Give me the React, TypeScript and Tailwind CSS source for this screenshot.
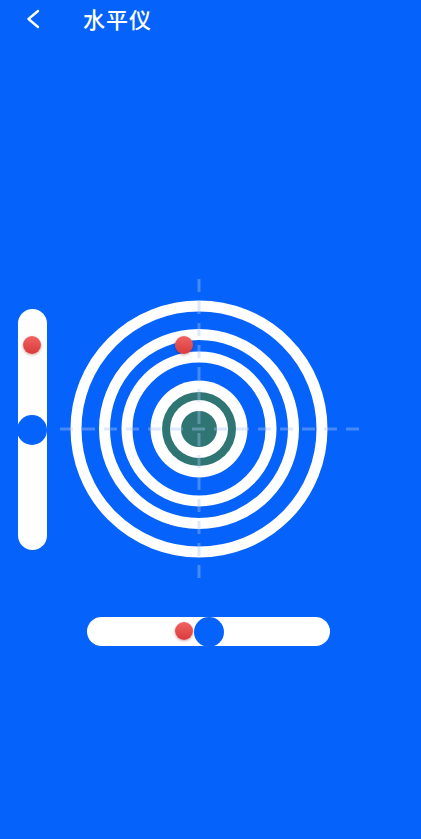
import React from "react";

const RedBall = ({ className }: { className: string }) => (
  <div
    className={
      "absolute rounded-full bg-linear-to-b from-[#f26262] to-[#d83a3a] shadow-[0_1px_3px_rgba(110,0,0,0.35)] " +
      className
    }
  />
);

const Target = () => {
  const cx = 152;
  const cy = 150;
  // white rings: [outer radius, thickness]
  const rings = [
    [128.5, 11],
    [100, 11],
    [77.5, 11],
  ];
  return (
    <div className="relative shrink-0">
      <svg width="312" height="302" viewBox="0 0 312 302">
        {rings.map(([r, t]) => (
          <circle key={r} cx={cx} cy={cy} r={r - t / 2} fill="none" stroke="#fff" strokeWidth={t} />
        ))}
        <circle cx={cx} cy={cy} r={48.5} fill="#fff" />
        <circle cx={cx} cy={cy} r={37} fill="#2f7573" />
        <circle cx={cx} cy={cy} r={29} fill="#fff" />
        <circle cx={cx} cy={cy} r={18} fill="#2f7573" />
        <g stroke="#a9c6f7" strokeOpacity="0.4" strokeWidth="3" strokeDasharray="13 9">
          <line x1={cx} y1="0" x2={cx} y2="302" />
          <line x1="13" y1={cy} x2="312" y2={cy} />
        </g>
      </svg>
      <RedBall className="left-[128px] top-[57px] h-[18px] w-[18px]" />
    </div>
  );
};

export default function App() {
  return (
    <div
      className="flex min-h-[839px] w-full flex-col bg-[#0562fb] text-white"
      style={{ fontFamily: '"Noto Sans", "Noto Sans CJK SC", sans-serif' }}
    >
      {/* header */}
      <div className="flex h-[38px] items-center">
        <button className="ml-[23px] flex h-[24px] w-[20px] items-center justify-center">
          <svg width="16" height="20" viewBox="0 0 16 20" fill="none">
            <path d="M13 2 L3.5 10 L13 18" stroke="#fff" strokeWidth="2.4" strokeLinecap="round" strokeLinejoin="round" />
          </svg>
        </button>
        <h1 className="ml-[40px] text-[22px] font-medium leading-none tracking-[1px]">水平仪</h1>
      </div>

      {/* level area */}
      <div className="mt-[241px] flex">
        <div className="relative ml-[17.5px] mt-[30px] h-[241px] w-[29px] rounded-full bg-white">
          <RedBall className="left-[5px] top-[27px] h-[18px] w-[18px]" />
          <div className="absolute left-[-0.5px] top-[106px] h-[30px] w-[30px] rounded-full bg-[#0562fb]" />
        </div>
        <Target />
      </div>

      <div className="relative ml-[87px] mt-[36px] h-[29px] w-[243px] rounded-full bg-white">
        <RedBall className="left-[88px] top-[4.5px] h-[18px] w-[18px]" />
        <div className="absolute left-[107px] top-[0px] h-[30px] w-[30px] rounded-full bg-[#0562fb]" />
      </div>
    </div>
  );
}
